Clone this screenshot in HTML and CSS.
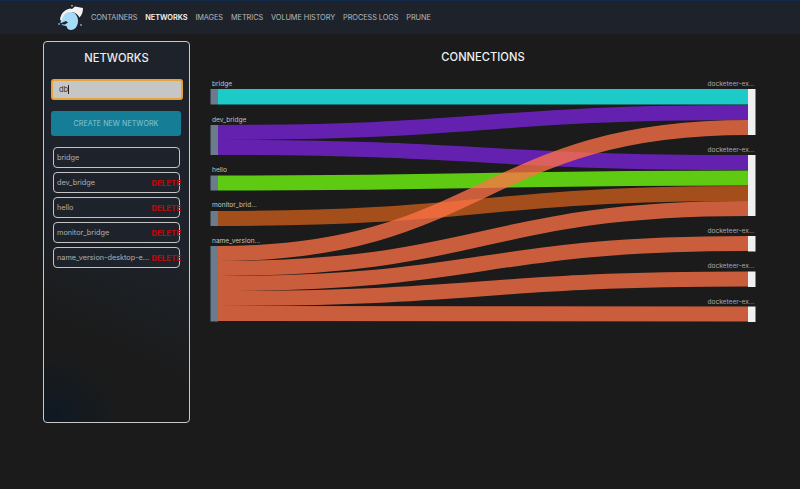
FILE: index.html
```html
<!DOCTYPE html>
<html lang="en">
<head>
<meta charset="utf-8">
<title>Networks</title>
<link rel="stylesheet" href="styles.css">
</head>
<body>
<header class="topbar">
  <svg class="logo" viewBox="0 0 26 26" width="26" height="26" aria-label="logo">
    <path class="logo-head" d="M4 12 C6 8 10 6 14 7 C18 8 20 12 20 16 C20 21 17 25 13 25 C11 25 9 24 8.500 21 C6 21 3 20 2.500 18 C2.500 16 3 14 4 12 Z"/>
    <path class="logo-arc" d="M2 15 C2.500 9 6 5 12 3.500 L14 4 L17 1.500 L25 3 C25 7 24 10 21.500 12.500 C20 9.500 17 7 13 7 C8 7 5 10 4 15 Z"/>
    <path class="logo-mark" d="M1 19 L8 16 L10 17.500 L7 19.500 Z"/>
    <circle class="logo-dot" cx="14" cy="0.800" r="0.800"/>
    <circle class="logo-dot" cx="23" cy="20" r="0.800"/>
    <circle class="logo-dot" cx="1" cy="19" r="0.800"/>
  </svg>
  <nav class="nav">
    <a class="nav-link">CONTAINERS</a>
    <a class="nav-link nav-active">NETWORKS</a>
    <a class="nav-link">IMAGES</a>
    <a class="nav-link">METRICS</a>
    <a class="nav-link">VOLUME HISTORY</a>
    <a class="nav-link">PROCESS LOGS</a>
    <a class="nav-link">PRUNE</a>
  </nav>
</header>
<main class="page">
  <aside class="sidebar">
    <h2 class="side-title">NETWORKS</h2>
    <div class="search"><span class="search-text">db</span><span class="caret"></span></div>
    <button class="create">CREATE NEW NETWORK</button>
    <ul class="list">
      <li class="item"><span class="item-name">bridge</span></li>
      <li class="item"><span class="item-name">dev_bridge</span><span class="del">DELETE</span></li>
      <li class="item"><span class="item-name">hello</span><span class="del">DELETE</span></li>
      <li class="item"><span class="item-name">monitor_bridge</span><span class="del">DELETE</span></li>
      <li class="item"><span class="item-name">name_version-desktop-e...</span><span class="del">DELETE</span></li>
    </ul>
  </aside>
  <section class="chart">
    <h2 class="chart-title">CONNECTIONS</h2>
    <svg class="sankey" viewBox="210 76 546 250" width="546" height="250">
      <g class="links">
        <path class="l-cyan" d="M218 96.700C483 96.700 483 96.700 748 96.700"/>
        <path class="l-purple" d="M218 132.500C483 132.500 483 112.500 748 112.500"/>
        <path class="l-purple" d="M218 147.500C483 147.500 483 162.500 748 162.500"/>
        <path class="l-green" d="M218 183C483 183 483 178 748 178"/>
        <path class="l-brown" d="M218 218.500C483 218.500 483 193.500 748 193.500"/>
      </g>
      <g class="links links-orange">
        <path d="M218 253.500C483 253.500 483 127.500 748 127.500"/>
        <path d="M218 268.500C483 268.500 483 208.500 748 208.500"/>
        <path d="M218 283.500C483 283.500 483 243.500 748 243.500"/>
        <path d="M218 298.500C483 298.500 483 279 748 279"/>
        <path d="M218 313.500C483 313.500 483 314 748 314"/>
      </g>
      <g class="nodes-left">
        <rect x="210.500" y="89" width="7.500" height="15.500"/>
        <rect x="210.500" y="125" width="7.500" height="30"/>
        <rect x="210.500" y="175.500" width="7.500" height="15"/>
        <rect x="210.500" y="211" width="7.500" height="15"/>
        <rect x="210.500" y="246" width="7.500" height="75.500"/>
      </g>
      <g class="nodes-right">
        <rect x="748" y="89" width="7.500" height="46"/>
        <rect x="748" y="155" width="7.500" height="61"/>
        <rect x="748" y="236" width="7.500" height="15.500"/>
        <rect x="748" y="271.500" width="7.500" height="15.500"/>
        <rect x="748" y="306.500" width="7.500" height="15.500"/>
      </g>
      <g class="labels">
        <text x="212" y="86.300">bridge</text>
        <text x="212" y="121.800">dev_bridge</text>
        <text x="212" y="172.300">hello</text>
        <text x="212" y="207">monitor_brid...</text>
        <text x="212" y="243">name_version...</text>
      </g>
      <g class="labels labels-right">
        <text x="754.500" y="86.300">docketeer-ex...</text>
        <text x="754.500" y="151.800">docketeer-ex...</text>
        <text x="754.500" y="232.800">docketeer-ex...</text>
        <text x="754.500" y="268.300">docketeer-ex...</text>
        <text x="754.500" y="303.800">docketeer-ex...</text>
      </g>
    </svg>
  </section>
</main>
</body>
</html>
```
FILE: styles.css
```css
* { box-sizing: border-box; }
html, body { margin: 0; height: 100%; }
body {
  background: #1b1b1b;
  font-family: Inter, "Liberation Sans", sans-serif;
  color: #d8d8d8;
  overflow: hidden;
}
.topbar {
  height: 34px;
  display: flex;
  align-items: center;
  padding-left: 58px;
  gap: 7px;
  background: #1e232b;
  border-top: 1px solid #122a4a;
}
.logo { flex: none; }
.logo-head { fill: #a6dcf7; }
.logo-arc { fill: #f2f2f2; }
.logo-mark { fill: #1e232b; }
.logo-dot { fill: #e8e8e8; }
.nav { display: flex; gap: 8px; }
.nav-link {
  font-size: 7.400px;
  letter-spacing: -0.100px;
  color: #b4b8bd;
}
.nav-active { color: #f4f4f4; font-weight: 600; }
.page {
  display: flex;
  gap: 20px;
  padding: 7px 0 0 43px;
}
.sidebar {
  flex: none;
  width: 147px;
  height: 382px;
  border: 1px solid #c8c8c8;
  border-radius: 4px;
  padding: 9px 7px 0;
  background:
    radial-gradient(ellipse 70px 70px at 10px 375px, rgba(12, 24, 36, .8), transparent),
    linear-gradient(205deg, #1e232b 45%, #1c1f23 62%, #1b1b1b 78%);
}
.side-title {
  margin: 0 0 13px;
  font-size: 11.200px;
  line-height: 15px;
  font-weight: 500;
  text-align: center;
  color: #ececec;
}
.search {
  height: 21px;
  width: 131.500px;
  display: flex;
  align-items: center;
  padding-left: 6px;
  background: #c6c6c6;
  border: 2px solid #e8a23c;
  border-radius: 3px;
  color: #333;
  font-size: 7.500px;
}
.caret { width: 1px; height: 9px; background: #222; }
.create {
  display: block;
  width: 130px;
  height: 24.500px;
  margin: 11px 0 11.500px;
  padding: 0;
  border: 0;
  border-radius: 3px;
  background: #157d95;
  color: #85c6d3;
  font: 7.200px Inter, "Liberation Sans", sans-serif;
}
.list {
  list-style: none;
  margin: 0;
  padding: 0 0 0 1.500px;
  display: flex;
  flex-direction: column;
  gap: 4.100px;
}
.item {
  width: 127.500px;
  height: 21px;
  display: flex;
  align-items: center;
  justify-content: space-between;
  padding-left: 3.500px;
  border: 1.500px solid #c4c4c4;
  border-radius: 4px;
  background: #1e232b;
  font-size: 7.300px;
  color: #aeb0b2;
  white-space: nowrap;
}
.del {
  flex: none;
  font-size: 7.800px;
  font-weight: 800;
  color: #b40c0c;
  margin-right: -2px;
}
.chart { flex: none; width: 546px; }
.chart-title {
  margin: 9px 0 11px;
  font-size: 11.200px;
  line-height: 15px;
  font-weight: 500;
  text-align: center;
  color: #f0f0f0;
}
.sankey { display: block; }
.links path { fill: none; stroke-width: 15px; stroke-opacity: .77; }
.links .l-cyan { stroke: #1dfffd; stroke-width: 15.500px; }
.l-purple { stroke: #7a23dd; }
.l-green { stroke: #72ff0f; }
.l-brown { stroke: #ce5f1b; }
.links-orange { opacity: .77; }
.links-orange path { stroke: #ff7346; stroke-opacity: 1; }
.nodes-left rect { fill: #6b7b8c; }
.nodes-right rect { fill: #f0f0f0; }
.labels text { font-size: 6.600px; fill: #c4c4c4; }
.labels-right text { text-anchor: end; fill: #a8a8a8; }
```
